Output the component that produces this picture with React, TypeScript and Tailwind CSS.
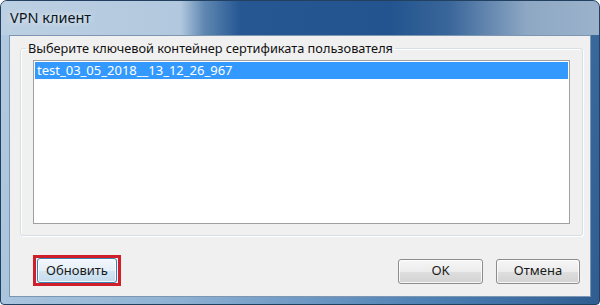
import React from "react";

const font = { fontFamily: '"Noto Sans", "Open Sans", sans-serif' };

function Btn({ label, w, def }: { label: string; w: string; def?: boolean }) {
  return (
    <div
      className={`${w} h-[25px] rounded-[3px] border flex items-center justify-center text-[13px] text-[#1a1a1a] ${
        def
          ? "border-[#3c7fb1] bg-[linear-gradient(to_bottom,#f2f7fb_0%,#e5eff8_50%,#d3e5f3_51%,#c4dcee_100%)]"
          : "border-[#8c8c8c] bg-[linear-gradient(to_bottom,#f6f6f6_0%,#ececec_50%,#dedede_51%,#d3d3d3_100%)]"
      } shadow-[inset_0_0_0_1px_rgba(255,255,255,0.8)]`}
    >
      {label}
    </div>
  );
}

export default function App() {
  return (
    <div
      className="w-[600px] h-[305px] flex flex-col border border-[#22405f] rounded-t-[7px] rounded-b-[4px] overflow-hidden bg-[linear-gradient(100deg,#b3cbe1_0%,#8eb1d3_35%,#4d7fb3_75%,#2f5d92_100%)]"
      style={font}
    >
      <div className="h-[34px] shrink-0 flex items-center pl-[9px] bg-[linear-gradient(to_right,#bcd0e3_0%,#b2c8de_30%,#5f87b2_34%,#265793_40%,#23548f_65%,#3a669a_75%,#8ea8c4_88%,#9bb2cb_100%)]">
        <span className="text-[14.5px] text-[#0c1520] [text-shadow:0_0_6px_rgba(255,255,255,0.9)]">VPN клиент</span>
      </div>
      <div className="flex-1 mx-[8px] mb-[7px] border border-[#7d97b3] bg-[#f0f0f0] flex flex-col">
        <fieldset className="mt-[4px] ml-[10px] mr-[7px] border border-[#d5dfe5] rounded-[3px] shadow-[inset_1px_1px_0_#ffffff,1px_1px_0_#ffffff]">
          <legend className="ml-[5px] px-[2px] text-[12.75px] text-[#111] leading-[16px]">
            Выберите ключевой контейнер сертификата пользователя
          </legend>
          <div className="mt-[4px] mx-[12px] mb-[11px] h-[164px] bg-white border border-[#a0a0a0] p-px">
            <div className="h-[17px] bg-[#3399ff] text-white text-[13px] leading-[17px] pl-[2px]">
              test_03_05_2018__13_12_26_967
            </div>
          </div>
        </fieldset>
        <div className="mt-[19px] flex items-center pl-[23px] pr-[10px]">
          <div className="border-[3px] border-[#cf1f2b] p-[1px] h-[31px] flex items-center">
            <Btn label="Обновить" w="w-[80px]" def />
          </div>
          <div className="flex-1" />
          <div className="mt-[1px] flex gap-[13px]">
            <Btn label="OK" w="w-[85px]" />
            <Btn label="Отмена" w="w-[84px]" />
          </div>
        </div>
      </div>
    </div>
  );
}
